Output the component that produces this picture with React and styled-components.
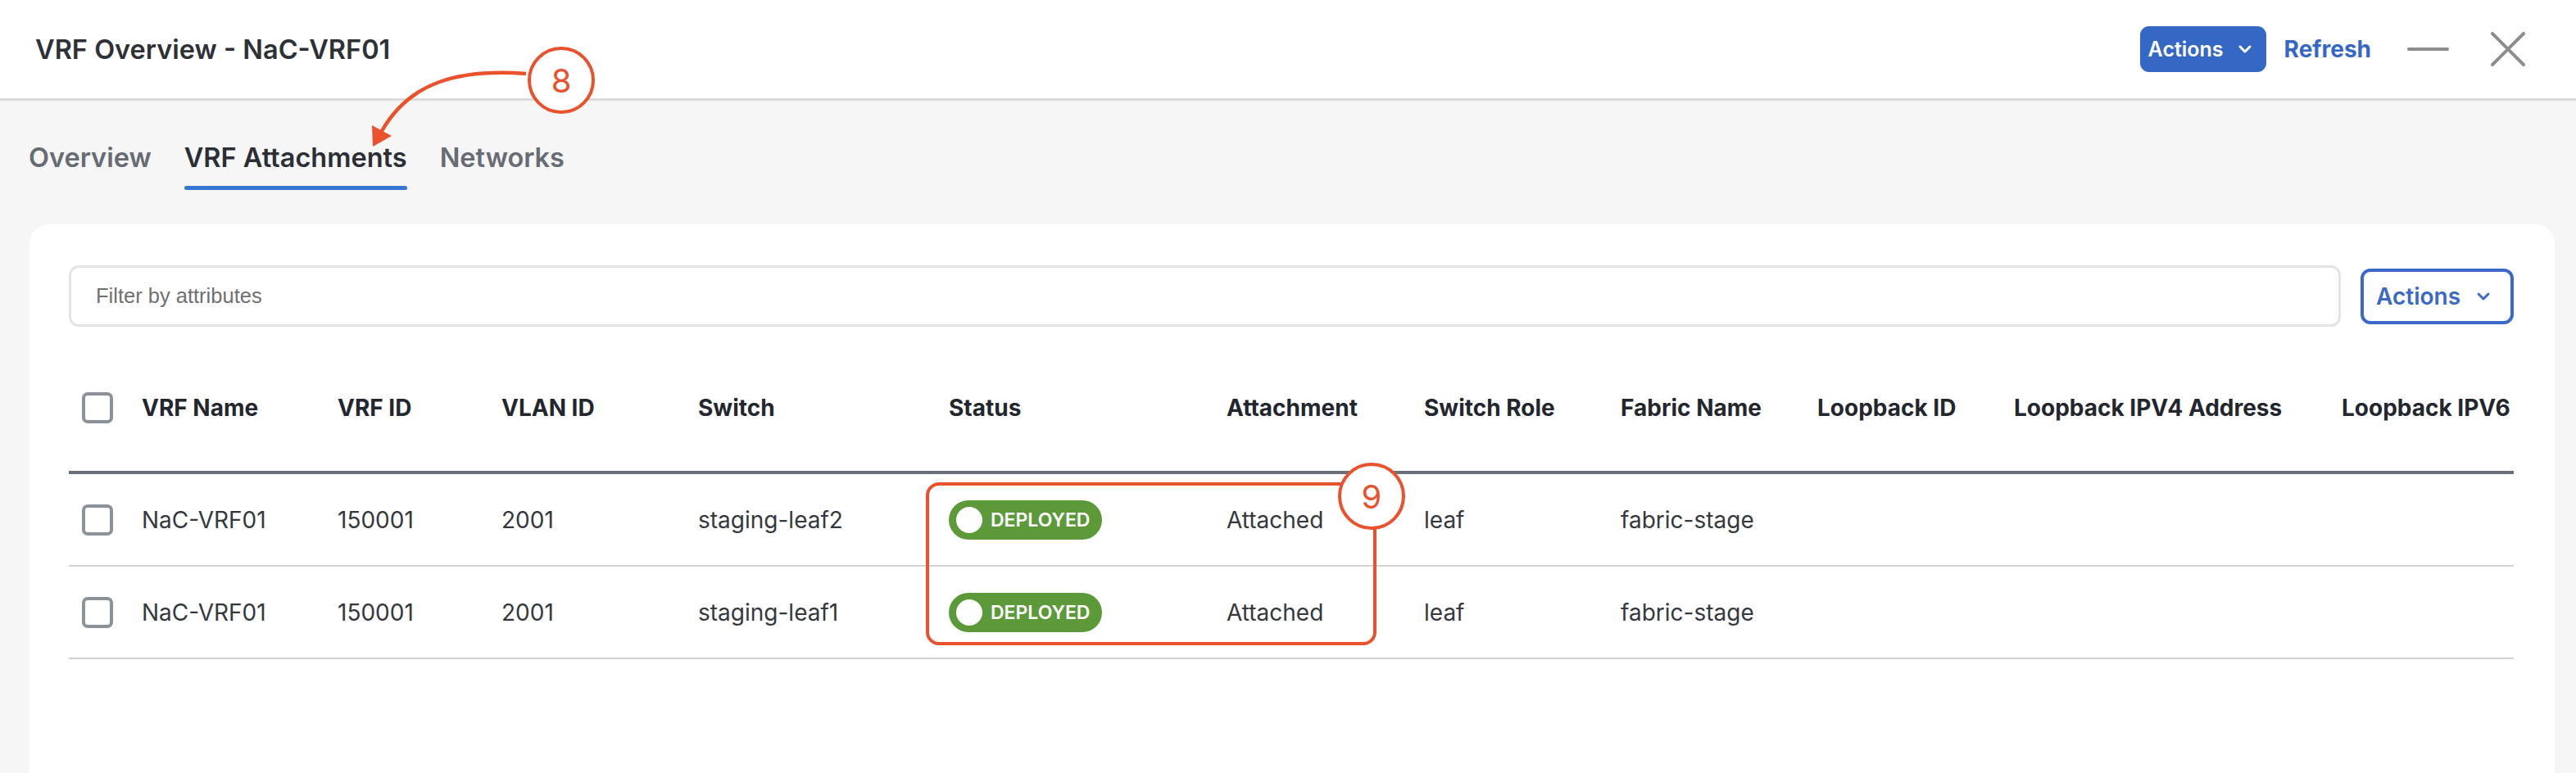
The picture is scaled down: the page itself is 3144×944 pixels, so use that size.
import React from 'react';
import styled, { createGlobalStyle } from 'styled-components';
import { ChevronDown } from 'lucide-react';

const GlobalStyle = createGlobalStyle`
    * { box-sizing: border-box; }
    body {
        margin: 0;
        background-color: #f6f6f6;
        font-family: Inter, "Noto Sans", sans-serif;
        color: #2e3136;
    }
`;

const ORANGE = '#e9522c';

const Page = styled.div`
    position: relative;
    width: 3144px;
    height: 944px;
    overflow: hidden;
    background-color: #f6f6f6;
`;

const Header = styled.div`
    height: 123px;
    background-color: #ffffff;
    border-bottom: 3px solid #dcdcdc;
    padding: 0 62px 0 43px;
    display: flex;
    align-items: center;
    justify-content: space-between;
`;

const Title = styled.h1`
    margin: 0;
    font-size: 32.5px;
    font-weight: 600;
    color: #2e3136;
`;

const HeaderTools = styled.div`
    display: flex;
    align-items: center;
`;

const FilledButton = styled.button`
    width: 154px;
    height: 56px;
    border: none;
    border-radius: 11px;
    background-color: #3567c4;
    color: #ffffff;
    font-family: inherit;
    font-size: 25px;
    font-weight: 600;
    display: flex;
    align-items: center;
    justify-content: center;
    gap: 14px;
    padding: 0 4px 0 0;
`;

const TextLink = styled.span`
    margin-left: 22px;
    font-size: 28px;
    font-weight: 700;
    color: #3767c6;
`;

const Minimize = styled.span`
    display: block;
    width: 51px;
    height: 4px;
    border-radius: 2px;
    background-color: #8d8d8d;
    margin-left: 44px;
`;

const CloseIcon = styled.svg`
    margin-left: 51px;
    width: 42px;
    height: 42px;
`;

const TabBar = styled.div`
    display: flex;
    gap: 40px;
    padding: 52px 0 0 35px;
`;

const Tab = styled.div`
    position: relative;
    font-size: 32.5px;
    line-height: 36px;
    font-weight: 600;
    padding-bottom: 21px;
    color: ${p => (p.$active ? '#2b2f35' : '#676c74')};

    &::after {
        content: '';
        position: absolute;
        left: 0;
        right: 0;
        bottom: 0;
        height: 5px;
        border-radius: 3px;
        background-color: ${p => (p.$active ? '#3575d3' : 'transparent')};
    }
`;

const Card = styled.div`
    margin: 42px 26px 0 36px;
    min-height: 760px;
    background-color: #ffffff;
    border-radius: 24px;
    padding: 50px 50px 0 48px;
`;

const Toolbar = styled.div`
    display: flex;
    align-items: center;
    gap: 24px;
`;

const FilterInput = styled.input`
    flex: 1;
    height: 75px;
    border: 3px solid #e3e4e7;
    border-radius: 12px;
    padding: 0 0 0 30px;
    font-family: "Liberation Sans", Arial, sans-serif;
    font-size: 25.5px;
    color: #333;
    outline: none;

    &::placeholder {
        color: #707070;
    }
`;

const OutlineButton = styled.button`
    width: 187px;
    height: 68px;
    border: 4px solid #3a69c7;
    border-radius: 12px;
    background-color: #ffffff;
    color: #3a69c7;
    font-family: inherit;
    font-size: 28px;
    font-weight: 600;
    display: flex;
    align-items: center;
    justify-content: center;
    gap: 16px;
    padding: 0 6px 0 0;
`;

const columns = '89px 239px 200px 240px 306px 339px 241px 240px 240px 240px 400px 210px';

const Table = styled.div`
    margin-top: 21px;
    width: 2984px;
`;

const Row = styled.div`
    display: grid;
    grid-template-columns: ${columns};
    align-items: center;
    height: ${p => (p.$head ? '155px' : '111px')};
    border-bottom: ${p => (p.$head ? '4px solid #6a7079' : '2px solid #d2d2d2')};
    box-sizing: content-box;
`;

const Cell = styled.div`
    font-size: 28px;
    white-space: nowrap;
    font-weight: ${p => (p.$head ? 700 : 400)};
    color: ${p => (p.$head ? '#23272d' : '#35383d')};
`;

const CheckCell = styled.div`
    padding-left: 16px;
    display: flex;
    align-items: center;
`;

const Checkbox = styled.span`
    display: block;
    width: 38px;
    height: 38px;
    border: 4px solid #8c929a;
    border-radius: 7px;
    background-color: #ffffff;
`;

const StatusBadge = styled.span`
    display: inline-flex;
    align-items: center;
    gap: 10px;
    height: 48px;
    padding: 0 15px 0 9px;
    border-radius: 24px;
    background-color: #5c9a39;
    color: #ffffff;
    font-size: 23px;
    font-weight: 600;
`;

const BadgeDot = styled.span`
    width: 32px;
    height: 32px;
    border-radius: 50%;
    background-color: #ffffff;
`;

const Callout = styled.div`
    position: absolute;
    left: ${p => p.$x - 41}px;
    top: ${p => p.$y - 41}px;
    width: 82px;
    height: 82px;
    border-radius: 50%;
    border: 4px solid ${ORANGE};
    background-color: #ffffff;
    color: ${ORANGE};
    font-size: 40px;
    font-weight: 400;
    display: flex;
    align-items: center;
    justify-content: center;
    z-index: 3;
`;

const Highlight = styled.div`
    position: absolute;
    left: 1130px;
    top: 589px;
    width: 550px;
    height: 199px;
    border: 4px solid ${ORANGE};
    border-radius: 16px;
    z-index: 2;
`;

const ArrowSvg = styled.svg`
    position: absolute;
    left: 440px;
    top: 70px;
    width: 220px;
    height: 120px;
    z-index: 2;
`;

const headers = [
    'VRF Name', 'VRF ID', 'VLAN ID', 'Switch', 'Status', 'Attachment', 'Switch Role',
    'Fabric Name', 'Loopback ID', 'Loopback IPV4 Address', 'Loopback IPV6',
];

const rows = [
    { name: 'NaC-VRF01', vrfId: '150001', vlan: '2001', sw: 'staging-leaf2', attach: 'Attached', role: 'leaf', fabric: 'fabric-stage' },
    { name: 'NaC-VRF01', vrfId: '150001', vlan: '2001', sw: 'staging-leaf1', attach: 'Attached', role: 'leaf', fabric: 'fabric-stage' },
];

export default function App() {
    return (
        <Page>
            <GlobalStyle />
            <Header>
                <Title>VRF Overview - NaC-VRF01</Title>
                <HeaderTools>
                    <FilledButton>
                        Actions
                        <ChevronDown size={24} strokeWidth={3} />
                    </FilledButton>
                    <TextLink>Refresh</TextLink>
                    <Minimize />
                    <CloseIcon viewBox="0 0 42 42">
                        <path d="M2 2 L40 40 M40 2 L2 40" stroke="#8d8d8d" strokeWidth="4" strokeLinecap="round" />
                    </CloseIcon>
                </HeaderTools>
            </Header>

            <TabBar>
                <Tab>Overview</Tab>
                <Tab $active>VRF Attachments</Tab>
                <Tab>Networks</Tab>
            </TabBar>

            <Card>
                <Toolbar>
                    <FilterInput placeholder="Filter by attributes" />
                    <OutlineButton>
                        Actions
                        <ChevronDown size={24} strokeWidth={3} />
                    </OutlineButton>
                </Toolbar>

                <Table>
                    <Row $head>
                        <CheckCell><Checkbox /></CheckCell>
                        {headers.map(h => (
                            <Cell $head key={h}>{h}</Cell>
                        ))}
                    </Row>
                    {rows.map(r => (
                        <Row key={r.sw}>
                            <CheckCell><Checkbox /></CheckCell>
                            <Cell>{r.name}</Cell>
                            <Cell>{r.vrfId}</Cell>
                            <Cell>{r.vlan}</Cell>
                            <Cell>{r.sw}</Cell>
                            <Cell>
                                <StatusBadge><BadgeDot />DEPLOYED</StatusBadge>
                            </Cell>
                            <Cell>{r.attach}</Cell>
                            <Cell>{r.role}</Cell>
                            <Cell>{r.fabric}</Cell>
                            <Cell />
                            <Cell />
                            <Cell />
                        </Row>
                    ))}
                </Table>
            </Card>

            {/* annotations */}
            <ArrowSvg viewBox="440 70 220 120">
                <path d="M642 90 C560 84 500 100 466 160" fill="none" stroke={ORANGE} strokeWidth="4.5" />
                <polygon points="455,179 454,153 478,166" fill={ORANGE} />
            </ArrowSvg>
            <Callout $x={685} $y={98}>8</Callout>
            <Highlight />
            <Callout $x={1674} $y={606}>9</Callout>
        </Page>
    );
}
